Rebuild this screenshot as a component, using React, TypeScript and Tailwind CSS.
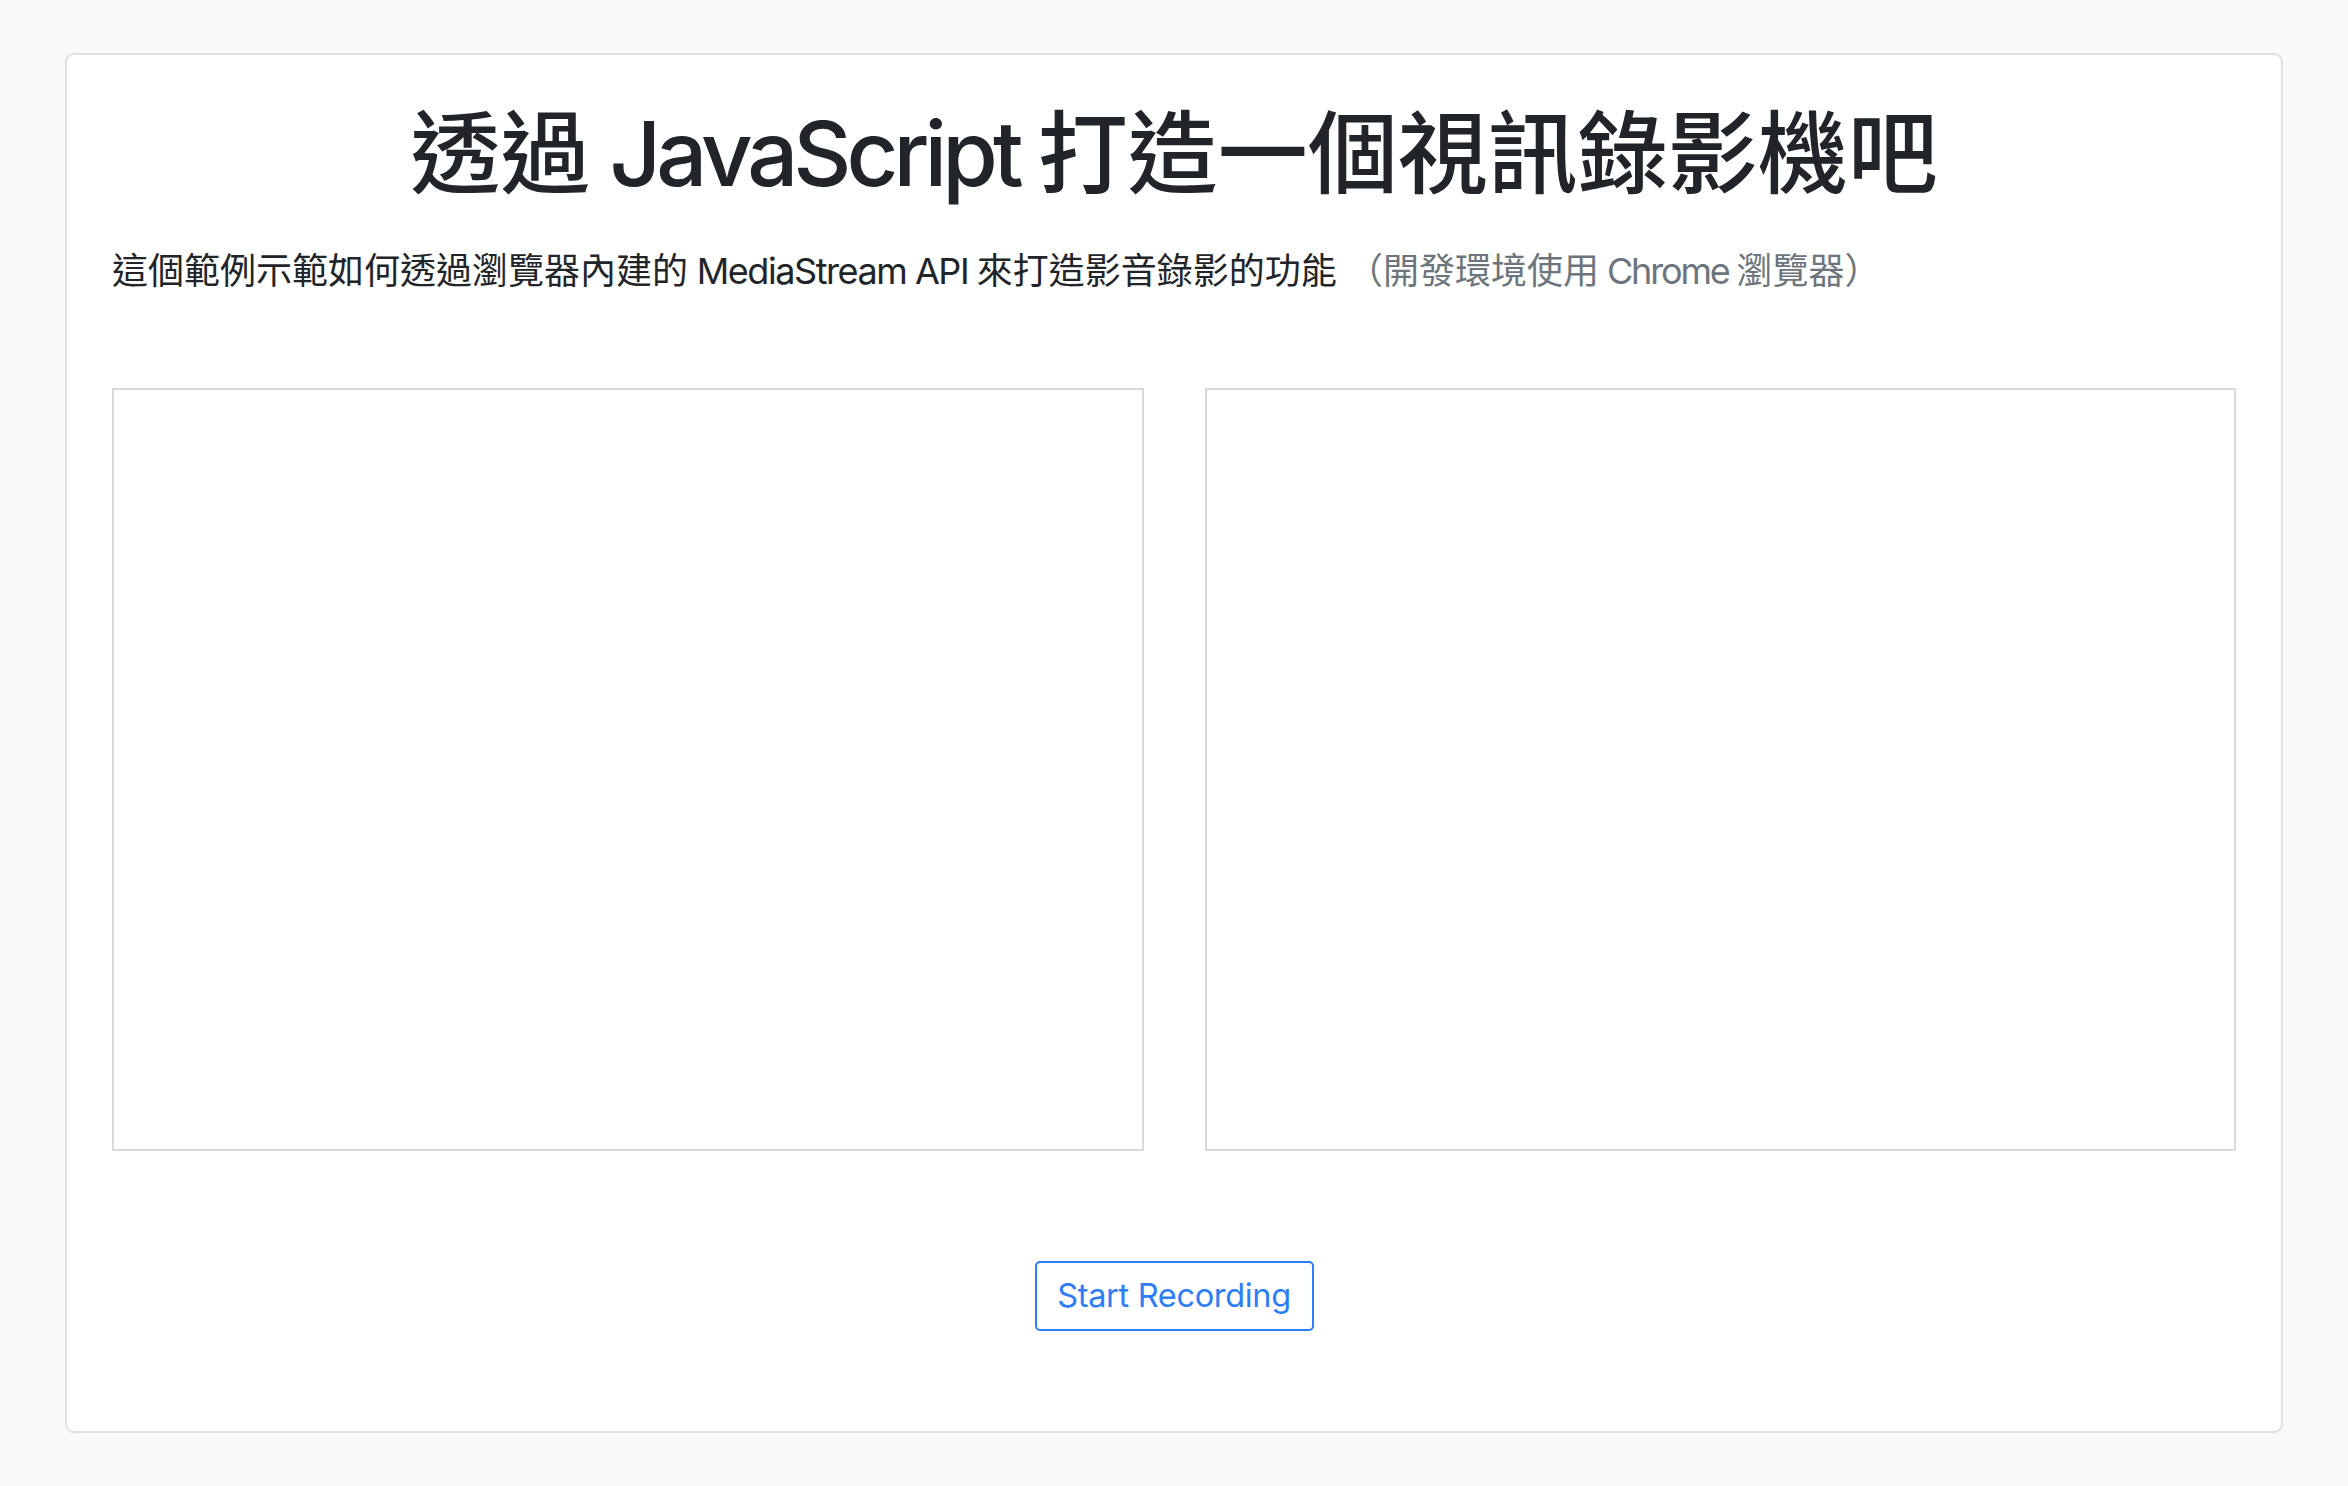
export default function App() {
  const font = { fontFamily: '"Inter", "Noto Sans CJK TC", sans-serif' }
  return (
    <div className="min-h-screen bg-[#f9f9f9] px-[65px] pt-[53px]" style={font}>
      <div className="rounded-[9px] border-2 border-[#e0e0e0] bg-white px-[45px] pt-[45px] pb-[100px]">
        <h1 className="mb-[36px] text-center text-[90px] leading-[108px] font-medium text-[#212529]">
          透過<span className="tracking-[-0.055em]"> JavaScript </span>打造一個視訊錄影機吧
        </h1>
        <p className="mb-[36px] text-[36px] leading-[54px] text-[#212529]">
          這個範例示範如何透過瀏覽器內建的<span className="tracking-[-0.04em]"> MediaStream API </span>來打造影音錄影的功能{" "}
          <span className="text-[#6c757d]">
            （開發環境使用<span className="tracking-[-0.06em]"> Chrome </span>瀏覽器）
          </span>
        </p>
        <div className="mt-[90px] grid grid-cols-2 gap-[61px]">
          <div className="h-[763px] border-2 border-[#d9d9d9] bg-white" />
          <div className="h-[763px] border-2 border-[#d9d9d9] bg-white" />
        </div>
        <div className="mt-[110px] flex justify-center">
          <button className="h-[70px] w-[279px] rounded-[5px] border-2 border-[#2b7ef7] text-[32.5px] leading-none tracking-[-0.01em] text-[#2b7ef7]">
            Start Recording
          </button>
        </div>
      </div>
    </div>
  )
}
